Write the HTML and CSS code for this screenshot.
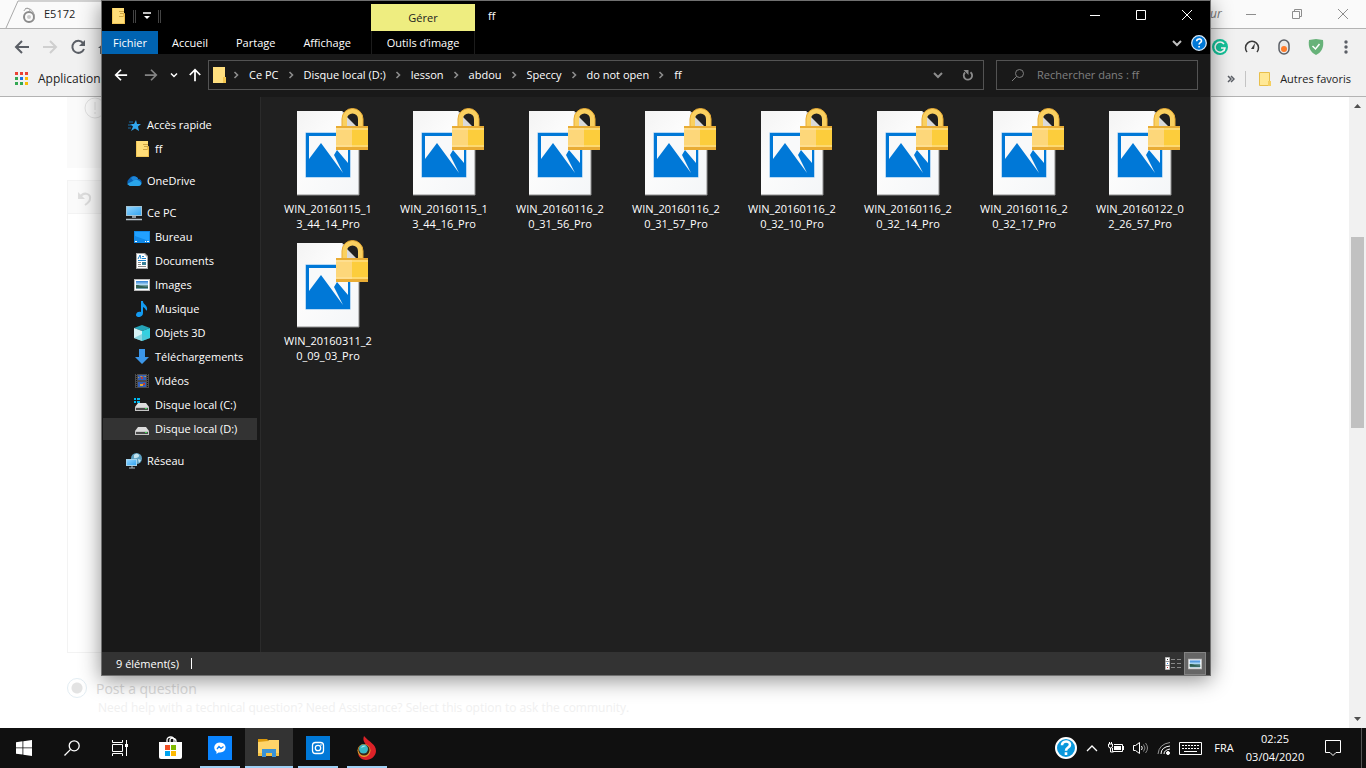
FILE: index.html
```html
<!DOCTYPE html>
<html lang="fr">
<head>
    <meta charset="UTF-8">
    <meta name="viewport" content="width=device-width, initial-scale=1.0">
    <title>ff</title>
    <link rel="stylesheet" href="styles.css">
</head>
<body>

    <!-- shared icons -->
    <svg class="sprite" aria-hidden="true">
        <defs>
            <linearGradient id="paper" x1="0" y1="0" x2="1" y2="1">
                <stop offset="0" stop-color="#f4f4f4"/><stop offset=".4" stop-color="#fcfcfc"/><stop offset="1" stop-color="#f4f6f8"/>
            </linearGradient>
            <linearGradient id="screen" x1="0" y1="0" x2="1" y2="1">
                <stop offset="0" stop-color="#8fd4ff"/><stop offset="1" stop-color="#35a5f0"/>
            </linearGradient>
            <linearGradient id="sky" x1="0" y1="0" x2="0" y2="1">
                <stop offset="0" stop-color="#2d7fd6"/><stop offset=".5" stop-color="#bfe4f7"/><stop offset=".6" stop-color="#3e6f6a"/><stop offset="1" stop-color="#7ea9bf"/>
            </linearGradient>
        </defs>
        <symbol id="photo" viewBox="0 0 72 88">
            <path d="M0 3h45l17 17v67H0z" fill="url(#paper)"/>
            <path d="M62 20v67H0" fill="none" stroke="#8d8d8d" stroke-width="1"/>
            <path d="M45 3l17 17H49z" fill="#d7d7d7"/>
            <path d="M8.500 24.500h45v45h-45z" fill="#7db9ee"/>
            <path d="M9 25h44v44H9z" fill="#0078d7"/>
            <path d="M12 28h39v27L40 42l-3 5 9 18L24 35 12 51z" fill="#f8f9fa"/>
            <path d="M49 21V11a6.500 6.500 0 0 1 13 0v10z" fill="#202020"/>
            <path d="M49 21V8l13 13z" fill="#dadada"/>
            <path d="M47.500 19V11a8 8 0 0 1 16 0v8" fill="none" stroke="#fad060" stroke-width="5"/>
            <path d="M45 19v-8a10.500 10.500 0 0 1 21 0v8" fill="none" stroke="#e9ac34" stroke-width="1"/>
            <path d="M39 18h32v24H39z" fill="#fdd77a"/>
            <path d="M55 18h16v24H55z" fill="#fccd3c"/>
            <path d="M39 18h32v2H39zM39 39h32v3H39z" fill="#e9ac34"/>
            <path d="M39 21h32M39 38h32" stroke="#ffe6a5"/>
        </symbol>
        <symbol id="folder" viewBox="0 0 16 16">
            <path d="M2 0h12v16H2z" fill="#ffdf7f"/>
            <path d="M12 10h3v6h-3z" fill="#f3c64f"/>
        </symbol>
        <symbol id="zipfolder" viewBox="0 0 16 16">
            <path d="M2 0h12v16H2z" fill="#ffdd78"/>
            <path d="M2 0h1v16H2zM2 15h12v1H2z" fill="#f0c658"/>
            <path d="M9 3h5v1H9zM10 5h5v1h-5zM9 8h6v1H9z" fill="#d0a544"/>
            <path d="M13 6h2v3h-2zM14 9h1v7h-1z" fill="#edbd4c"/>
        </symbol>
        <symbol id="picture" viewBox="0 0 16 16">
            <path d="M0 2h16v12H0z" fill="#b9b9b9"/>
            <path d="M1 3h14v10H1z" fill="#fff"/>
            <path d="M2 4h12v8H2z" fill="url(#sky)"/>
            <path d="M2 8c4 0 6 2 12 2v1H2z" fill="#2f5f4f"/>
        </symbol>
        <symbol id="disk" viewBox="0 0 16 16">
            <path d="M4 6h8l3 4H1z" fill="#dcdcdc"/>
            <path d="M1 10h14v4H1z" fill="#c4c4c4"/>
            <path d="M2 11h12v2H2z" fill="#4a4a4a"/>
            <path d="M11 11h2v1h-2z" fill="#3ddc55"/>
        </symbol>
        <symbol id="crumb" viewBox="0 0 8 8">
            <path d="M2.500 1l3 3-3 3" fill="none" stroke="#8c8c8c" stroke-width="1.600"/>
        </symbol>
        <symbol id="down" viewBox="0 0 10 8">
            <path d="M1 2l4 4 4-4" fill="none" stroke="currentColor" stroke-width="2"/>
        </symbol>
        <symbol id="arrow" viewBox="0 0 16 16">
            <path d="M15 8H3M8 2L2 8l6 6" fill="none" stroke="currentColor" stroke-width="2"/>
        </symbol>
    </svg>

    <main class="desktop">

        <!-- browser behind -->
        <section class="browser">
            <header class="tab-strip">
                <div class="tab">
                    <svg width="44" height="28" viewBox="0 0 44 28"><path d="M6 28L18 1h84" fill="none" stroke="#a9a9a9"/><circle cx="29" cy="17" r="5" fill="none" stroke="#8a8a8a" stroke-width="2"/><circle cx="29" cy="17" r="2" fill="#c9c9c9"/><path d="M24 11c1-4 7-3 9 1s2 6 0 9M25 9c3-2 5 0 5 3" fill="none" stroke="#a2a2a2"/></svg>
                    <span>E5172</span>
                </div>
                <span class="profile">ur</span>
                <div class="browser-controls">
                    <button aria-label="Réduire"><svg width="12" height="12"><path d="M1 6.500h10" stroke="#8d8d8d"/></svg></button>
                    <button aria-label="Niveau inférieur"><svg width="12" height="12"><path d="M1.500 3.500h7v7h-7zM3.500 3V1.500h7v7H9" fill="none" stroke="#8d8d8d"/></svg></button>
                    <button aria-label="Fermer"><svg width="12" height="12"><path d="M1 1l10 10M11 1L1 11" stroke="#8d8d8d"/></svg></button>
                </div>
            </header>
            <div class="toolbar">
                <button aria-label="Précédent" class="dark"><svg width="16" height="16"><use href="#arrow"/></svg></button>
                <button aria-label="Suivant" class="pale"><svg class="flip" width="16" height="16"><use href="#arrow"/></svg></button>
                <button aria-label="Actualiser" class="dark"><svg width="16" height="16"><path d="M13 4a6 6 0 1 0 1 6" fill="none" stroke="currentColor" stroke-width="2"/><path d="M15 1v6H9z" fill="currentColor"/></svg></button>
                <button aria-label="Accueil" class="dark"><svg width="16" height="16"><path d="M0 9l8-7 8 7h-2v6H9v-4H7v4H2V9z" fill="currentColor"/></svg></button>
                <div class="extensions">
                    <button aria-label="Grammaire"><svg width="16" height="16"><circle cx="8" cy="8" r="8" fill="#15c39a"/><path d="M12 5a5 5 0 1 0 1 4H9M13 9l-1 3" fill="none" stroke="#fff" stroke-width="1.500"/></svg></button>
                    <button aria-label="Vitesse"><svg width="16" height="16"><path d="M3 13a6.500 6.500 0 1 1 10 0" fill="none" stroke="#3a3a3a" stroke-width="1.500"/><path d="M7 10l4-6-1 6z" fill="#3a3a3a"/></svg></button>
                    <button aria-label="Interrupteur"><svg width="16" height="16"><rect x="3" y="1" width="10" height="14" rx="5" fill="#e9e9e9" stroke="#5b5f66" stroke-width="1.500"/><circle cx="8" cy="10" r="3" fill="#ff7c2a"/></svg></button>
                    <button aria-label="Protection"><svg width="16" height="16"><path d="M8 0l7 1c1 7-1 12-7 15C2 13 0 8 1 1z" fill="#67b279"/><path d="M4.500 7l3 3 4-5" fill="none" stroke="#fff" stroke-width="1.500"/></svg></button>
                    <button aria-label="Menu"><svg width="16" height="16" fill="#5b5f66"><circle cx="8" cy="3" r="1.700"/><circle cx="8" cy="8" r="1.700"/><circle cx="8" cy="13" r="1.700"/></svg></button>
                </div>
            </div>
            <nav class="bookmarks">
                <a href="#"><svg width="14" height="14"><path d="M0 0h3v3H0zM5 0h3v3H5zM10 0h3v3h-3z" fill="#ea4335"/><path d="M0 5h3v3H0zM0 10h3v3H0z" fill="#34a853"/><path d="M5 5h3v3H5z" fill="#1a73e8"/><path d="M5 10h3v3H5z" fill="#34a853"/><path d="M10 5h3v3h-3zM10 10h3v3h-3z" fill="#fbbc04"/></svg>Applications</a>
                <div class="other-bookmarks">
                    <svg width="8" height="8"><path d="M1 1l3 3-3 3M4 1l3 3-3 3" fill="none" stroke="#5b5f66" stroke-width="1.500"/></svg>
                    <a href="#"><svg width="12" height="14"><path d="M.5.500h10v13H.5z" fill="#ffe896" stroke="#e8bf4c"/><path d="M9 9h3v5H9z" fill="#f5cf60"/></svg>Autres favoris</a>
                </div>
            </nav>
            <div class="viewport">
                <div class="page">
                    <div class="notice"><svg width="24" height="24"><circle cx="11" cy="11" r="10" fill="none" stroke="#e2e2e2"/><path d="M11 5v8M11 15v2" stroke="#e0e0e0"/></svg></div>
                    <div class="editor">
                        <div class="editor-bar"><svg width="16" height="16"><path d="M3 7c4-6 11-3 10 2 0 2-2 4-5 6" fill="none" stroke="#dedede" stroke-width="2"/><path d="M1 2v7h7z" fill="#dedede"/></svg></div>
                    </div>
                    <div class="choice">
                        <input type="radio" id="post" name="kind" checked>
                        <div>
                            <label for="post">Post a question</label>
                            <p>Need help with a technical question? Need Assistance? Select this option to ask the community.</p>
                        </div>
                    </div>
                </div>
                <div class="scrollbar">
                    <svg width="7" height="4"><path d="M0 4l3.500-4L7 4z" fill="#505050"/></svg>
                    <div class="track"><div class="thumb"></div></div>
                    <svg width="7" height="4"><path d="M0 0l3.500 4L7 0z" fill="#505050"/></svg>
                </div>
            </div>
        </section>

        <!-- file explorer -->
        <section class="explorer">
            <header class="title-bar">
                <div class="quick-access">
                    <svg width="16" height="16"><use href="#zipfolder"/></svg>
                    <i class="grip"></i>
                    <svg width="8" height="8"><path d="M0 1h8" stroke="#fff" stroke-width="1.500"/><path d="M1 4h6L4 7z" fill="#fff"/></svg>
                    <i class="grip"></i>
                </div>
                <div class="context-tab">Gérer</div>
                <h1>ff</h1>
                <div class="window-controls">
                    <button aria-label="Réduire"><svg width="12" height="12"><path d="M1 6.500h10" stroke="#fff"/></svg></button>
                    <button aria-label="Agrandir"><svg width="12" height="12"><path d="M1.500 1.500h9v9h-9z" fill="none" stroke="#fff"/></svg></button>
                    <button aria-label="Fermer"><svg width="12" height="12"><path d="M1 1l10 10M11 1L1 11" stroke="#fff"/></svg></button>
                </div>
            </header>
            <nav class="ribbon">
                <div class="ribbon-tabs">
                    <button class="active">Fichier</button>
                    <button>Accueil</button>
                    <button>Partage</button>
                    <button>Affichage</button>
                </div>
                <button class="context-tool">Outils d’image</button>
                <div class="ribbon-end">
                    <button aria-label="Développer le ruban"><svg width="10" height="8"><use href="#down"/></svg></button>
                    <button aria-label="Aide"><svg width="16" height="16"><circle cx="8" cy="8" r="7.300" fill="#0078d7" stroke="#d8e9f8" stroke-width="1.300"/><path d="M5.700 6.200c0-3 4.800-3 4.800-.2 0 1.700-2.400 1.700-2.400 3.500M8.100 11v1.600" fill="none" stroke="#fff" stroke-width="1.600"/></svg></button>
                </div>
            </nav>
            <div class="address-row">
                <div class="history">
                    <button aria-label="Précédent"><svg width="14" height="14"><use href="#arrow"/></svg></button>
                    <button aria-label="Suivant" class="disabled"><svg class="flip" width="14" height="14"><use href="#arrow"/></svg></button>
                    <button aria-label="Emplacements récents" class="narrow"><svg width="8" height="6"><use href="#down"/></svg></button>
                    <button aria-label="Dossier parent" class="up"><svg class="turn" width="14" height="14"><use href="#arrow"/></svg></button>
                </div>
                <div class="address">
                    <svg class="place" width="16" height="16"><use href="#folder"/></svg>
                    <svg class="sep" width="8" height="8"><use href="#crumb"/></svg><a href="#">Ce PC</a>
                    <svg class="sep" width="8" height="8"><use href="#crumb"/></svg><a href="#">Disque local (D:)</a>
                    <svg class="sep" width="8" height="8"><use href="#crumb"/></svg><a href="#">lesson</a>
                    <svg class="sep" width="8" height="8"><use href="#crumb"/></svg><a href="#">abdou</a>
                    <svg class="sep" width="8" height="8"><use href="#crumb"/></svg><a href="#">Speccy</a>
                    <svg class="sep" width="8" height="8"><use href="#crumb"/></svg><a href="#">do not open</a>
                    <svg class="sep" width="8" height="8"><use href="#crumb"/></svg><a href="#">ff</a>
                    <div class="address-end">
                        <button aria-label="Emplacements précédents"><svg width="10" height="8"><use href="#down"/></svg></button>
                        <button aria-label="Actualiser"><svg width="12" height="12"><path d="M3 3.500a4.200 4.200 0 1 0 5.500-.3" fill="none" stroke="currentColor" stroke-width="1.800"/><path d="M1.500 1h5v5z" fill="currentColor"/></svg></button>
                    </div>
                </div>
                <label class="search">
                    <svg width="14" height="14"><circle cx="8.500" cy="5.500" r="4" fill="none" stroke="#808080"/><path d="M5.500 8.500L1 13" stroke="#808080"/></svg>
                    <input type="text" placeholder="Rechercher dans : ff" aria-label="Rechercher dans : ff">
                </label>
            </div>
            <div class="explorer-body">
                <nav class="sidebar">
                    <ul>
                        <li><a href="#"><svg width="16" height="16"><path d="M10 3l1 4h4l-3 2.500 1 4.500-4-2.500L5 14l2-4.500L4 7h4z" fill="#31a8f0"/><path d="M3 5h4M2 8h4M2 11h3" stroke="#1a6fa8"/></svg>Accès rapide</a></li>
                        <li class="sub"><a href="#"><svg width="16" height="16"><use href="#zipfolder"/></svg>ff</a></li>
                    </ul>
                    <ul>
                        <li><a href="#"><svg width="16" height="16"><path d="M4 13a4 4 0 0 1-1-7c3-5 8-3 9 0 5 0 5 7 0 7z" fill="#0a64b8"/><path d="M5 5c3-3 7-1 7 1l-4 3z" fill="#1e86d8"/><path d="M1 11l8-4c6-1 9 6 3 6H4z" fill="#2aa5ea"/></svg>OneDrive</a></li>
                    </ul>
                    <ul>
                        <li><a href="#"><svg width="16" height="16"><path d="M0 1h16v10H0z" fill="#a4c4d4"/><path d="M1 2h14v8H1z" fill="url(#screen)"/><path d="M6 12h4M0 14.500h16" stroke="#b8c4cc" stroke-width="1.500"/></svg>Ce PC</a></li>
                        <li class="sub"><a href="#"><svg width="16" height="16"><path d="M0 2h16v12H0z" fill="#1089e8"/><path d="M1 3h14v9L1 7z" fill="#22a1ff"/><path d="M1 12.500h2M11 12.500h1M13 12.500h2" stroke="#fff"/></svg>Bureau</a></li>
                        <li class="sub"><a href="#"><svg width="16" height="16"><path d="M2 0h9l3 3v13H2z" fill="#a8a8a8"/><path d="M3 1h7l3 3v11H3z" fill="#fff"/><path d="M4 6l2-4 1 4M8 3.500h2M4 7.500h8M8 5.500h4" stroke="#1c83cb" fill="none"/><path d="M4 9.500h3M4 11.500h3M4 13.500h8" stroke="#888"/><path d="M8 9h4v3H8z" fill="#397f95"/></svg>Documents</a></li>
                        <li class="sub"><a href="#"><svg width="16" height="16"><use href="#picture"/></svg>Images</a></li>
                        <li class="sub"><a href="#"><svg width="16" height="16"><path d="M7 0h2c0 4 5 4 4 9-1 2-1-2-4-3v6c0 5-7 5-7 2s3-4 5-3z" fill="#139bf2"/></svg>Musique</a></li>
                        <li class="sub"><a href="#"><svg width="16" height="16"><path d="M0 3l8-3 8 3-8 3z" fill="#24a3b8"/><path d="M0 3l8 3v10l-8-3z" fill="#d5f2f5"/><path d="M8 6l8-3v10l-8 3z" fill="#35d0e0"/><path d="M0 13l8-4 8 4-8 3z" fill="#57c3d3" opacity=".6"/></svg>Objets 3D</a></li>
                        <li class="sub"><a href="#"><svg width="16" height="16"><path d="M5 0h6v8h4l-7 7-7-7h4z" fill="#3c96e8"/></svg>Téléchargements</a></li>
                        <li class="sub"><a href="#"><svg width="16" height="16"><path d="M1 1h14v14H1z" fill="#4c4c4c"/><path d="M2.500 1v14M13.500 1v14" stroke="#111" stroke-width="1" stroke-dasharray="1 1"/><path d="M4 2h8v5H4zM4 9h8v5H4z" fill="#325fb8"/><path d="M4 5l3-2 2 1 3-1v1H4zM6 11h3v2H6z" fill="#e0a72e"/><path d="M7 4h2v2H7zM9 10h2v2H9z" fill="#bd3c35"/></svg>Vidéos</a></li>
                        <li class="sub"><a href="#"><svg width="16" height="16"><use href="#disk"/><path d="M0 1h2v2H0zM3 1h3v2H3zM0 4h2v2H0zM3 4h3v2H3z" fill="#00b7f0"/></svg>Disque local (C:)</a></li>
                        <li class="sub selected"><a href="#"><svg width="16" height="16"><use href="#disk"/></svg>Disque local (D:)</a></li>
                    </ul>
                    <ul>
                        <li><a href="#"><svg width="16" height="16"><circle cx="10.500" cy="5.500" r="5.500" fill="#5c9fc0"/><path d="M8 2c2-2 4-1 5 0s-2 4-5 3zM12 6l3 1-2 3z" fill="#c3e3ee"/><path d="M0 6h11v7H0z" fill="#a4d4ee"/><path d="M1 7h9v5H1z" fill="url(#screen)"/><path d="M3 15h6M6 13v2" stroke="#b8c4cc"/></svg>Réseau</a></li>
                    </ul>
                </nav>
                <div class="files">
                    <figure><svg width="72" height="88"><use href="#photo"/></svg><figcaption>WIN_20160115_1<br>3_44_14_Pro</figcaption></figure>
                    <figure><svg width="72" height="88"><use href="#photo"/></svg><figcaption>WIN_20160115_1<br>3_44_16_Pro</figcaption></figure>
                    <figure><svg width="72" height="88"><use href="#photo"/></svg><figcaption>WIN_20160116_2<br>0_31_56_Pro</figcaption></figure>
                    <figure><svg width="72" height="88"><use href="#photo"/></svg><figcaption>WIN_20160116_2<br>0_31_57_Pro</figcaption></figure>
                    <figure><svg width="72" height="88"><use href="#photo"/></svg><figcaption>WIN_20160116_2<br>0_32_10_Pro</figcaption></figure>
                    <figure><svg width="72" height="88"><use href="#photo"/></svg><figcaption>WIN_20160116_2<br>0_32_14_Pro</figcaption></figure>
                    <figure><svg width="72" height="88"><use href="#photo"/></svg><figcaption>WIN_20160116_2<br>0_32_17_Pro</figcaption></figure>
                    <figure><svg width="72" height="88"><use href="#photo"/></svg><figcaption>WIN_20160122_0<br>2_26_57_Pro</figcaption></figure>
                    <figure><svg width="72" height="88"><use href="#photo"/></svg><figcaption>WIN_20160311_2<br>0_09_03_Pro</figcaption></figure>
                </div>
            </div>
            <footer class="status-bar">
                <span class="count">9 élément(s)</span>
                <div class="views">
                    <button aria-label="Détails"><svg width="16" height="14"><path d="M.5.500h4v12h-4z" fill="#fff" stroke="#b5b5b5"/><path d="M0 4.500h5M0 8.500h5" stroke="#999"/><path d="M2 2h1v1H2z" fill="#333"/><path d="M2 6h1v1H2z" fill="#2d7fd6"/><path d="M2 10h1v1H2z" fill="#c03030"/><path d="M6 2.500h4M12 2.500h4M6 6.500h4M12 6.500h4M6 10.500h4M12 10.500h4" stroke="#888"/></svg></button>
                    <button aria-label="Grandes icônes" class="on"><svg width="14" height="14"><use href="#picture"/></svg></button>
                </div>
            </footer>
        </section>
    </main>

    <footer class="taskbar">
        <div class="system-buttons">
            <button aria-label="Démarrer"><svg width="16" height="16" fill="#fff"><path d="M0 2.200l6.500-.9v6.200H0zM7.300 1.200L16 0v7.500H7.300zM0 8.300h6.500v6.300L0 13.700zM7.300 8.300H16V16l-8.700-1.200z"/></svg></button>
            <button aria-label="Rechercher"><svg width="16" height="16" fill="none" stroke="#fff" stroke-width="1.300"><circle cx="10.200" cy="5.800" r="5"/><path d="M6.600 9.400L.5 15.500"/></svg></button>
            <button aria-label="Affichage des tâches"><svg width="16" height="16" fill="none" stroke="#fff"><path d="M.5 0v2.500h10V0M.5 16v-2.500h10V16M.5 4.500h10v7H.5zM14.500 0v16"/><path d="M13 4h3v3h-3z" fill="#fff" stroke="none"/></svg></button>
        </div>
        <div class="apps">
            <button aria-label="Store"><svg width="24" height="24"><path d="M8 7V4c0-4 7-4 7 0v3M11 6V4c0-3 6-2 6 1v2" fill="none" stroke="#fff" stroke-width="1.300"/><path d="M0 6h23v15q0 2-2 2H2q-2 0-2-2z" fill="#fff"/><path d="M6 9h5v5H6z" fill="#f04e23"/><path d="M12 9h5v5h-5z" fill="#7fba00"/><path d="M6 15h5v5H6z" fill="#00a4ef"/><path d="M12 15h5v5h-5z" fill="#ffb900"/></svg></button>
            <button aria-label="Messenger" class="running"><svg width="24" height="24"><path d="M0 0h24v24H0z" fill="#0a84ff"/><path d="M12 6.500c7.500 0 7.500 10 0 10h-1.500L8.500 18v-2.300C4.500 13 6 6.500 12 6.500z" fill="#fff"/><path d="M9 13l2-2.500 2 2 2.500-2" fill="none" stroke="#0a84ff" stroke-width="1.300"/></svg></button>
            <button aria-label="Explorateur" class="running current"><svg width="24" height="24"><path d="M1 3h9l2 2h-2v3H1z" fill="#dc9a0c"/><path d="M1 6l10-1 1-1h10v16H1z" fill="#ffd569"/><path d="M1 17h21v3H1z" fill="#f5c244"/><path d="M5 21v-8h14v8h-4v-4H9v4z" fill="#3a93d6"/></svg></button>
            <button aria-label="Instagram" class="running"><svg width="24" height="24"><path d="M0 0h24v24H0z" fill="#0078d7"/><rect x="6.500" y="6.500" width="11" height="11" rx="3" fill="none" stroke="#fff" stroke-width="1.300"/><circle cx="12" cy="12" r="2.700" fill="none" stroke="#fff" stroke-width="1.300"/><circle cx="15" cy="9" r=".8" fill="#fff"/></svg></button>
            <button aria-label="Torch" class="running"><svg width="24" height="24"><path d="M9 0c5 6 12 8 12 15 0 5-5 9-10 9-4 0-7-3-8-6 4 3 10 3 12-2 1-6-9-8-6-16z" fill="#dc2228"/><circle cx="9" cy="14.500" r="6.500" fill="#efa12c"/><circle cx="9" cy="14" r="5.600" fill="#3a2416"/><circle cx="8.500" cy="13" r="4.500" fill="#38b8c4"/><path d="M6 12c1-3 4-3 5-2z" fill="#a6e6e8"/></svg></button>
        </div>
        <div class="tray">
            <button class="wide" aria-label="Assistance"><svg width="24" height="24"><circle cx="12" cy="12" r="10" fill="#0a98dc" stroke="#fff" stroke-width="2"/><path d="M8 9.300c0-5 8-5 8-.6 0 3-4 2.700-4 6M12 16.300v2.600" fill="none" stroke="#fff" stroke-width="2.600"/></svg></button>
            <button aria-label="Icônes cachées"><svg width="12" height="8"><path d="M1 7l5-5 5 5" fill="none" stroke="#fff" stroke-width="1.300"/></svg></button>
            <button aria-label="Batterie"><svg width="16" height="14"><path d="M4.500 3.500h10v7h-10z" fill="none" stroke="#fff"/><path d="M6 5h7v4H6zM15 5h1v4h-1z" fill="#fff"/><path d="M0 3h6v4H4v3H2V7H0z" fill="#101010"/><path d="M.5 3v2q0 2 2 2t2-2V3zM1.500 1v2M3.500 1v2M2.500 7v4h3" fill="none" stroke="#fff"/></svg></button>
            <button aria-label="Volume"><svg width="17" height="14" fill="none" stroke="#fff"><path d="M1.500 4.500h2l4-3v11l-4-3h-2zM9.500 5q1.500 2 0 4"/><path d="M11.500 3.500q3 3.500 0 7M13.500 2q4 5 0 10" stroke="#8a8a8a"/></svg></button>
            <button aria-label="Réseau"><svg width="14" height="14" fill="none" stroke="#fff"><circle cx="11" cy="12" r="1.500" fill="#fff"/><path d="M7 13q0-4 6-5M4 13q0-7 9-8"/><path d="M1 13Q2 3 13 1.500" stroke="#999"/></svg></button>
            <button class="wide" aria-label="Clavier"><svg width="23" height="13" fill="none" stroke="#fff"><path d="M.5.500h22v12H.5z"/><path d="M3 3.500h17M3 6.500h17" stroke-dasharray="2 1"/><path d="M5 9.500h13"/></svg></button>
            <button class="lang">FRA</button>
            <button class="clock">02:25<br>03/04/2020</button>
            <button class="notifications" aria-label="Notifications"><svg width="17" height="16"><path d="M.5.500h15v12H11L8 15.500 5 12.500H.5z" fill="none" stroke="#fff"/></svg></button>
            <button class="peek" aria-label="Afficher le bureau"></button>
        </div>
    </footer>

</body>
</html>
```

FILE: styles.css
```css
* {
    box-sizing: border-box;
}

body {
    display: flex;
    flex-direction: column;
    height: 100vh;
    margin: 0;
    overflow: hidden;
    font-family: "Segoe UI", "Open Sans", "Noto Sans", sans-serif;
    font-size: 11px;
    line-height: 16px;
    color: #ffffff;
}

button {
    display: flex;
    align-items: center;
    justify-content: center;
    padding: 0;
    border: none;
    background: none;
    color: inherit;
    font: inherit;
}

a {
    color: inherit;
    text-decoration: none;
}

svg {
    flex: none;
    display: block;
}

ul, p, h1, figure {
    margin: 0;
    padding: 0;
    list-style: none;
}

.sprite {
    position: absolute;
    width: 0;
    height: 0;
}

.flip {
    transform: scaleX(-1);
}

.turn {
    transform: rotate(90deg);
}

.desktop {
    position: relative;
    flex: 1;
    min-height: 0;
    overflow: hidden;
}

/* browser */
.browser {
    display: flex;
    flex-direction: column;
    height: 100%;
    background-color: #f1f1f1;
    color: #222222;
    font-size: 12px;
}

.tab-strip {
    display: flex;
    align-items: center;
    height: 29px;
    background-color: #fafafa;
    border-bottom: 1px solid #b3b3b3;
}

.tab {
    display: flex;
    align-items: center;
    flex: 1;
    font-size: 11px;
}

.tab svg {
    overflow: visible;
}

.profile {
    width: 18px;
    color: #777777;
    font-style: italic;
}

.browser-controls {
    display: flex;
    height: 26px;
}

.browser-controls button {
    width: 46px;
}

.toolbar {
    display: flex;
    align-items: center;
    height: 36px;
    padding: 0 8px;
}

.toolbar button {
    width: 28px;
    height: 28px;
}

.toolbar .dark {
    color: #5b5f66;
}

.toolbar .pale {
    color: #cfcfcf;
}

.extensions {
    display: flex;
    gap: 4px;
    margin-left: auto;
}

.extensions button:last-child {
    width: 24px;
}

.bookmarks {
    display: flex;
    align-items: center;
    justify-content: space-between;
    height: 32px;
    padding: 0 15px 4px;
    border-bottom: 1px solid #b3b3b3;
}

.bookmarks a {
    display: flex;
    align-items: center;
    gap: 9px;
}

.other-bookmarks {
    display: flex;
    align-items: center;
    gap: 10px;
    font-size: 11px;
}

.other-bookmarks a {
    padding-left: 13px;
    border-left: 1px solid #c4c4c4;
}

.viewport {
    display: flex;
    justify-content: space-between;
    flex: 1;
    min-height: 0;
    background-color: #ffffff;
}

.page {
    display: flex;
    flex-direction: column;
    flex: 1;
    max-width: 1140px;
    padding: 0 0 12px 67px;
}

.notice {
    height: 71px;
    padding-left: 17px;
    background-color: #fafafa;
}

.editor {
    flex: 1;
    margin: 12px 0 24px;
    border: 1px solid #f3f3f3;
}

.editor-bar {
    padding: 9px;
    height: 33px;
    background-color: #fafafa;
    border-bottom: 1px solid #f3f3f3;
}

.choice {
    display: flex;
    align-items: flex-start;
    gap: 9px;
    color: #dadada;
    font-size: 14px;
}

.choice input {
    appearance: none;
    width: 20px;
    height: 20px;
    margin: 1px 0;
    border: 1px solid #e3edf3;
    border-radius: 50%;
    background: radial-gradient(circle, #e3e3e3 5px, #ffffff 6px);
}

.choice label {
    display: block;
    line-height: 23px;
}

.choice p {
    padding-left: 2px;
    color: #f0f0f0;
    font-size: 12px;
}

.scrollbar {
    display: flex;
    flex-direction: column;
    align-items: center;
    width: 17px;
    padding: 7px 2px;
    background-color: #f1f1f1;
}

.track {
    flex: 1;
    width: 100%;
    margin: 6px 0;
    padding-top: 123px;
}

.thumb {
    height: 39%;
    min-height: 191px;
    background-color: #c1c1c1;
}

/* explorer */
.explorer {
    position: absolute;
    inset: 0 155px 52px 101px;
    display: flex;
    flex-direction: column;
    border: 1px solid #707070;
    background-color: #191919;
    box-shadow: 0 4px 20px rgba(0, 0, 0, 0.45);
}

.title-bar {
    display: flex;
    height: 30px;
    background-color: #000000;
}

.quick-access {
    display: flex;
    align-items: center;
    gap: 6px;
    width: 269px;
    padding-left: 8px;
}

.grip {
    width: 3px;
    height: 13px;
    margin: 0 1px;
    border: 1px solid #444444;
    border-width: 0 1px;
}

.context-tab {
    width: 104px;
    margin-top: 3px;
    background-color: #eeed80;
    color: #222222;
    line-height: 28px;
    text-align: center;
}

.title-bar h1 {
    padding-left: 13px;
    font-size: 11px;
    font-weight: normal;
    line-height: 30px;
}

.window-controls {
    display: flex;
    margin-left: auto;
    height: 28px;
}

.window-controls button {
    width: 46px;
}

.ribbon {
    display: flex;
    height: 23px;
    background-color: #000000;
}

.ribbon-tabs {
    display: flex;
    width: 269px;
}

.ribbon-tabs button {
    padding: 0 14px;
}

.ribbon-tabs .active {
    width: 56px;
    padding: 0;
    background-color: #0063b1;
}

.context-tool {
    width: 104px;
    border: 1px solid #1c1c1c;
    border-width: 0 1px;
}

.ribbon-end {
    display: flex;
    gap: 9px;
    margin-left: auto;
    padding-right: 3px;
    color: #c0c0c0;
}

.address-row {
    display: flex;
    align-items: center;
    height: 43px;
    padding: 0 12px 1px 0;
}

.history {
    display: flex;
    width: 106px;
    padding-left: 4px;
}

.history button {
    width: 30px;
    height: 30px;
}

.history .disabled {
    color: #848484;
}

.history .narrow {
    width: 16px;
}

.history .up {
    width: 26px;
}

.address {
    display: flex;
    align-items: center;
    flex: 1;
    height: 30px;
    padding-left: 2px;
    border: 1px solid #535353;
}

.address .place {
    margin-right: -3px;
}

.address .sep {
    margin: 0 9px 0 8px;
}

.address-end {
    display: flex;
    margin-left: auto;
    color: #8c8c8c;
}

.address-end button {
    width: 30px;
    height: 28px;
}

.search {
    display: flex;
    align-items: center;
    gap: 12px;
    width: 202px;
    height: 30px;
    margin-left: 12px;
    padding: 0 14px;
    border: 1px solid #535353;
}

.search input {
    width: 100%;
    padding: 0;
    border: none;
    background: none;
    font: inherit;
    color: #ffffff;
}

.search input::placeholder {
    color: #808080;
}

.explorer-body {
    display: flex;
    flex: 1;
    min-height: 0;
}

.sidebar {
    width: 159px;
    padding: 16px 3px 0 1px;
    border-right: 1px solid #2b2b2b;
}

.sidebar ul {
    margin-bottom: 8px;
}

.sidebar li {
    height: 24px;
    padding: 1px 0;
}

.sidebar li a {
    display: flex;
    align-items: center;
    gap: 5px;
    height: 22px;
    padding-left: 23px;
}

.sidebar .sub a {
    padding-left: 31px;
}

.sidebar .selected a {
    background-color: #333333;
}

.files {
    display: grid;
    grid-template-columns: repeat(auto-fill, 116px);
    align-content: start;
    row-gap: 9px;
    flex: 1;
    padding: 11px 0 0 9px;
    background-color: #202020;
}

.files svg {
    margin-left: 27px;
}

.files figcaption {
    padding-top: 5px;
    line-height: 15px;
    text-align: center;
}

.status-bar {
    display: flex;
    align-items: center;
    justify-content: space-between;
    height: 23px;
    padding: 0 4px 0 14px;
    background-color: #333333;
}

.count {
    padding-right: 12px;
    border-right: 1px solid #ffffff;
    line-height: 11px;
}

.views {
    display: flex;
    height: 100%;
}

.views button {
    width: 22px;
}

.views .on {
    border: 1px solid #838383;
    background-color: #666666;
}

/* taskbar */
.taskbar {
    display: flex;
    height: 40px;
    background-color: #101010;
}

.system-buttons {
    display: flex;
    margin-right: 3px;
}

.system-buttons button,
.apps button {
    width: 48px;
}

.apps {
    display: flex;
    gap: 1px;
}

.apps .running {
    background: linear-gradient(#9fd0f5, #9fd0f5) center bottom / 40px 2px no-repeat;
}

.apps .current {
    background-color: #333333;
    background-size: 48px 2px;
}

.tray {
    display: flex;
    margin-left: auto;
}

.tray button {
    width: 24px;
}

.tray .wide {
    width: 29px;
}

.tray .lang {
    width: 38px;
}

.tray .clock {
    width: 64px;
    line-height: 18px;
}

.tray .notifications {
    width: 48px;
    margin: 0 4px 0 2px;
}

.tray .peek {
    width: 5px;
    border-left: 1px solid #555555;
}
```
